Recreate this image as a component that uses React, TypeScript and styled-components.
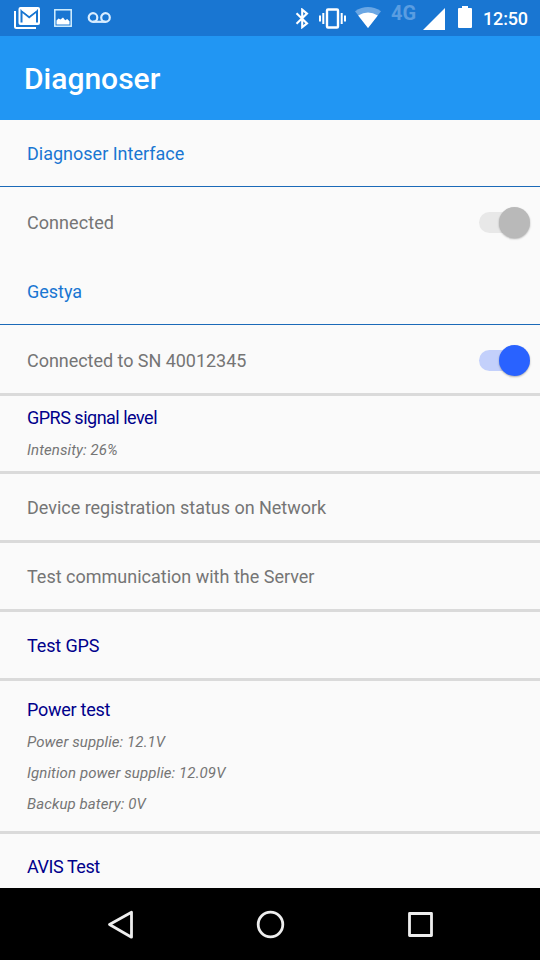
import React from "react";
import styled, { createGlobalStyle } from "styled-components";

const GlobalStyle = createGlobalStyle`
  * { box-sizing: border-box; }
  body { margin: 0; background: #fafafa; font-family: Roboto, sans-serif; }
`;

const Screen = styled.div`
  width: 540px;
  height: 960px;
  display: flex;
  flex-direction: column;
  overflow: hidden;
  background: #fafafa;
`;

const StatusBar = styled.header`
  flex: 0 0 36px;
  display: flex;
  justify-content: space-between;
  background: #1976d2;
  padding: 0 12px 0 14px;
`;

const StatusGroup = styled.div`
  display: flex;
  align-items: flex-start;
`;

const StatusIcon = styled.svg<{ $top: number; $gap?: number }>`
  display: block;
  flex: none;
  margin-top: ${(p) => p.$top}px;
  margin-left: ${(p) => p.$gap ?? 0}px;
`;

const NetworkType = styled.span`
  width: 26px;
  margin: 2px 0 0 10px;
  font-size: 20px;
  line-height: 22px;
  font-weight: 700;
  color: #5a9de1;
`;

const Clock = styled.span`
  width: 45px;
  margin: 8px 0 0 11px;
  font-size: 18px;
  line-height: 22px;
  font-weight: 500;
  letter-spacing: -0.15px;
  color: #fff;
`;

const AppBar = styled.div`
  flex: 0 0 84px;
  display: flex;
  align-items: center;
  padding: 0 24px;
  background: #2196f3;
`;

const Title = styled.h1`
  margin: 0;
  font-size: 30px;
  font-weight: 500;
  color: #fff;
`;

const List = styled.main`
  flex: 1 1 0;
  min-height: 0;
  overflow: hidden;
`;

const SectionHeader = styled.h2`
  margin: 0;
  height: 67px;
  padding: 0 27px;
  border-bottom: 1px solid #1b6ab8;
  font-size: 18px;
  font-weight: 400;
  line-height: 67px;
  color: #1976d2;
`;

const Row = styled.div<{ $height: number; $plain?: boolean; $top?: number }>`
  height: ${(p) => p.$height}px;
  display: flex;
  align-items: center;
  justify-content: space-between;
  padding: ${(p) => p.$top ?? 0}px 7px 0 27px;
  border-bottom: ${(p) => (p.$plain ? "none" : "3px solid #dadada")};
`;

const Label = styled.span<{ $active?: boolean; $tight?: number }>`
  font-size: 18px;
  line-height: 24px;
  letter-spacing: ${(p) => p.$tight ?? 0}px;
  color: ${(p) => (p.$active ? "#00008b" : "#757575")};
`;

const DetailRow = styled.div<{ $height: number; $top: number }>`
  height: ${(p) => p.$height}px;
  display: flex;
  flex-direction: column;
  padding: ${(p) => p.$top}px 27px 0;
  border-bottom: 3px solid #dadada;
`;

const Details = styled.div`
  display: flex;
  flex-direction: column;
  gap: 11px;
  margin-top: 10px;
`;

const Detail = styled.span`
  font-size: 15px;
  font-style: italic;
  line-height: 20px;
  letter-spacing: 0.1px;
  color: #757575;
`;

const NavBar = styled.nav`
  flex: 0 0 72px;
  display: flex;
  justify-content: center;
  gap: 114px;
  align-items: center;
  background: #000;
`;

const NavIcon = styled.svg`
  display: block;
  width: 36px;
  height: 36px;
  fill: none;
  stroke: #eee;
  stroke-width: 2.8;
  stroke-linejoin: round;
`;

const Switch = styled.div<{ $on?: boolean }>`
  width: 54px;
  height: 36px;
  display: flex;
  align-items: center;
  &::before {
    content: "";
    width: 36px;
    height: 21px;
    border-radius: 11px;
    background: ${(p) => (p.$on ? "#c3d0fb" : "#e8e8e8")};
  }
  &::after {
    content: "";
    width: 31px;
    height: 31px;
    margin-left: -16px;
    flex: none;
    border-radius: 50%;
    background: ${(p) => (p.$on ? "#2962ff" : "#b9b9b9")};
    box-shadow: 0 1px 2px rgba(0, 0, 0, 0.3);
  }
`;

export default function App() {
  return (
    <Screen>
      <GlobalStyle />
      <StatusBar>
        <StatusGroup>
          <StatusIcon $top={7} width="26" height="22" viewBox="0 0 26 22">
            <path d="M1 4v15.5a1.5 1.5 0 0 0 1.5 1.5H22" fill="none" stroke="#fff" strokeWidth="2" />
            <rect x="4.500" y="0" width="21.500" height="18" rx="2" fill="#fff" />
            <path d="M7.500 15.500V4l7.700 6.200L23 4v11.500" fill="none" stroke="#1976d2" strokeWidth="2" />
            <path d="M7 2.700h16.500l-8.300 6z" fill="#fff" />
          </StatusIcon>
          <StatusIcon $top={9} $gap={14} width="18" height="18" viewBox="0 0 18 18">
            <rect x=".8" y=".8" width="16.400" height="16.400" fill="none" stroke="#d5f1ff" strokeWidth="1.500" />
            <path d="M2.500 15.500v-4l2-2 2 1L9 8.500l2.200 2.700 2-1.200 2.300 2.200v3.300z" fill="#fff" />
          </StatusIcon>
          <StatusIcon $top={12} $gap={15} width="24" height="11" viewBox="0 0 24 11">
            <g fill="none" stroke="#d9edff" strokeWidth="2.200">
              <circle cx="6" cy="5.500" r="4.300" />
              <circle cx="18.500" cy="5.500" r="4.300" />
              <path d="M6 9.800h12.500" />
            </g>
          </StatusIcon>
        </StatusGroup>
        <StatusGroup>
          <StatusIcon $top={8} width="14" height="21" viewBox="0 0 14 21">
            <path d="M1.500 5.200l10.500 10.200L7.200 19.200V1.600l4.800 4L1.500 15.800" fill="none" stroke="#fff" strokeWidth="2.100" />
          </StatusIcon>
          <StatusIcon $top={8} $gap={10} width="27" height="21" viewBox="0 0 27 21">
            <rect x="8" y="1.500" width="11" height="18" rx="1" fill="none" stroke="#fff" strokeWidth="2.400" />
            <path d="M1 7.500v6M4.300 5v11M22.700 5v11M26 7.500v6" stroke="#fff" strokeWidth="2" />
          </StatusIcon>
          <StatusIcon $top={7} $gap={9} width="26" height="21" viewBox="0 0 26 21">
            <path d="M0 4.200Q13-4.200 26 4.200L13 21z" fill="#6ba7e4" />
            <path d="M3.200 8.500Q13 2.700 22.800 8.500L13 21z" fill="#fff" />
          </StatusIcon>
          <NetworkType>4G</NetworkType>
          <StatusIcon $top={8} $gap={6} width="22" height="22" viewBox="0 0 22 22">
            <path d="M22 0v22H0z" fill="#fff" />
          </StatusIcon>
          <StatusIcon $top={6} $gap={13} width="14" height="22" viewBox="0 0 14 22">
            <path d="M4 0h6v2h3a1 1 0 0 1 1 1v18a1 1 0 0 1-1 1H1a1 1 0 0 1-1-1V3a1 1 0 0 1 1-1h3z" fill="#fff" />
          </StatusIcon>
          <Clock>12:50</Clock>
        </StatusGroup>
      </StatusBar>
      <AppBar>
        <Title>Diagnoser</Title>
      </AppBar>
      <List>
        <SectionHeader>Diagnoser Interface</SectionHeader>
        <Row $height={71} $plain>
          <Label $tight={0.06}>Connected</Label>
          <Switch />
        </Row>
        <SectionHeader>Gestya</SectionHeader>
        <Row $height={71} $top={3}>
          <Label $tight={-0.04}>Connected to SN 40012345</Label>
          <Switch $on />
        </Row>
        <DetailRow $height={78} $top={10}>
          <Label $active $tight={-0.5}>GPRS signal level</Label>
          <Details>
            <Detail>Intensity: 26%</Detail>
          </Details>
        </DetailRow>
        <Row $height={69} $top={2}>
          <Label $tight={-0.02}>Device registration status on Network</Label>
        </Row>
        <Row $height={69} $top={2}>
          <Label>Test communication with the Server</Label>
        </Row>
        <Row $height={69} $top={2}>
          <Label $active $tight={-0.12}>Test GPS</Label>
        </Row>
        <DetailRow $height={153} $top={17}>
          <Label $active $tight={-0.26}>Power test</Label>
          <Details>
            <Detail>Power supplie: 12.1V</Detail>
            <Detail>Ignition power supplie: 12.09V</Detail>
            <Detail>Backup batery: 0V</Detail>
          </Details>
        </DetailRow>
        <Row $height={69}>
          <Label $active $tight={-0.45}>AVIS Test</Label>
        </Row>
      </List>
      <NavBar>
        <NavIcon viewBox="0 0 36 36"><path d="M7.500 18.500L29.500 6.200v25z" /></NavIcon>
        <NavIcon viewBox="0 0 36 36"><circle cx="18.500" cy="18.500" r="12.300" /></NavIcon>
        <NavIcon viewBox="0 0 36 36"><rect x="7.500" y="7.500" width="22" height="22" /></NavIcon>
      </NavBar>
    </Screen>
  );
}
